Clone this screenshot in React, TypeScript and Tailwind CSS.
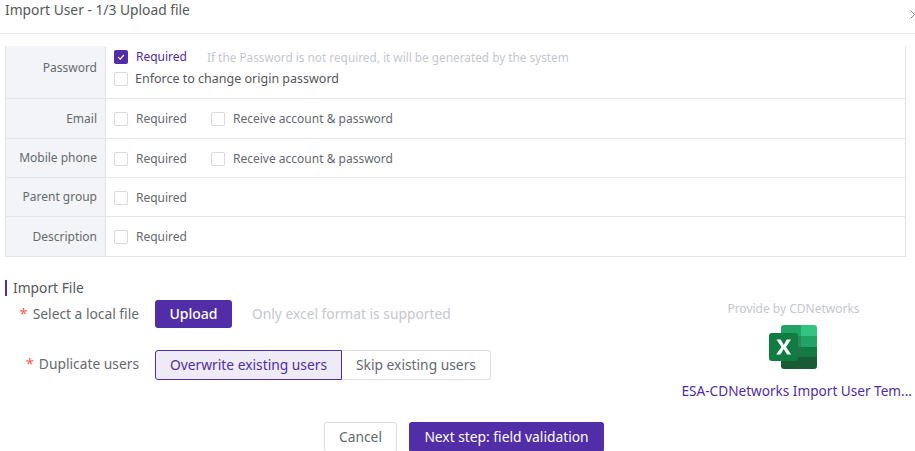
import * as React from "react"

const Box = ({ checked = false }: { checked?: boolean }) => (
    <span
        className={
            checked
                ? "flex h-[14px] w-[14px] shrink-0 items-center justify-center rounded-[2px] bg-[#512da8]"
                : "h-[14px] w-[14px] shrink-0 rounded-[2px] border border-[#d9d9de] bg-white"
        }
    >
        {checked && (
            <svg width="10" height="10" viewBox="0 0 10 10" fill="none">
                <path d="M2.2 5.2 4.2 7.2 7.9 3" stroke="#fff" strokeWidth="1.2" />
            </svg>
        )}
    </span>
)

const Check = ({ label, className = "" }: { label: string; className?: string }) => (
    <span className={`flex items-center ${className}`}>
        <Box />
        <span className="ml-[8px]">{label}</span>
    </span>
)

const Row = ({ label, children, height }: { label: string; children: React.ReactNode; height: string }) => (
    <div className={`flex border-b border-[#e3e5e8] ${height}`}>
        <div className="flex w-[100px] shrink-0 items-center justify-end border-r border-[#e3e5e8] bg-[#f2f4f7] pr-[8px] text-[#666a70]">
            {label}
        </div>
        <div className="flex min-w-0 flex-1 items-center pl-[8px] text-[#666a70]">{children}</div>
    </div>
)

const ExcelIcon = () => (
    <svg className="block" width="48" height="44" viewBox="0 0 48 44">
        <path d="M15 0h20v11H12V3a3 3 0 0 1 3-3z" fill="#21a366" />
        <path d="M32 0h13a3 3 0 0 1 3 3v8H32z" fill="#33c481" />
        <rect x="12" y="11" width="36" height="11" fill="#107c41" opacity="0.9" />
        <rect x="32" y="11" width="16" height="11" fill="#21a366" />
        <rect x="12" y="22" width="36" height="10" fill="#185c37" opacity="0.9" />
        <rect x="32" y="22" width="16" height="10" fill="#107c41" />
        <path d="M12 32h36v9a3 3 0 0 1-3 3H15a3 3 0 0 1-3-3z" fill="#185c37" />
        <rect x="0" y="8" width="29" height="28" rx="3" fill="#107c41" />
        <path d="M7.5 14.5h4.2l3 5.4 3.1-5.4H22L17 22l5.2 7.5H18l-3.3-5.6-3.3 5.6H7.2L12.5 22z" fill="#fff" />
    </svg>
)

export default function App() {
    return (
        <div className="h-[451px] w-[915px] overflow-hidden bg-white text-[12px] leading-[18px] text-[#666a70] [font-family:'Noto_Sans',sans-serif]">
            {/* Header */}
            <div className="flex h-[34px] items-start justify-between border-b border-[#e5e6e8] pl-[5px]">
                <span className="text-[13.8px] leading-[20px] text-[#55585c]">Import User - 1/3 Upload file</span>
                <svg className="mt-[10px] mr-[-4px] shrink-0" width="9" height="9" viewBox="0 0 9 9" fill="none">
                    <path d="M0.5 0.5 8.5 8.5M8.5 0.5 0.5 8.5" stroke="#8a8d91" strokeWidth="1" />
                </svg>
            </div>

            {/* Field rules table, scrolled a little under the header */}
            <div className="mt-[12px] ml-[5px] w-[901px] overflow-hidden border-r border-l border-[#e3e5e8]">
                <div className="mt-[-8px]">
                    <Row label="Password" height="h-[61px]">
                        <div className="flex flex-col gap-[4px]">
                            <div className="flex items-center">
                                <Box checked />
                                <span className="ml-[8px] text-[#512da8]">Required</span>
                                <span className="ml-[20px] text-[11.8px] text-[#c5c8d0]">If the Password is not required, it will be generated by the system</span>
                            </div>
                            <span className="flex items-center">
                                <Box />
                                <span className="ml-[7px] text-[12.5px] text-[#55585c]">Enforce to change origin password</span>
                            </span>
                        </div>
                    </Row>
                    <Row label="Email" height="h-[40px]">
                        <Check label="Required" />
                        <Check label="Receive account & password" className="ml-[24px]" />
                    </Row>
                    <Row label="Mobile phone" height="h-[39px]">
                        <Check label="Required" className="pt-[1px]" />
                        <Check label="Receive account & password" className="ml-[24px] pt-[1px]" />
                    </Row>
                    <Row label="Parent group" height="h-[39px]">
                        <Check label="Required" className="pt-[1px]" />
                    </Row>
                    <Row label="Description" height="h-[40px]">
                        <Check label="Required" />
                    </Row>
                </div>
            </div>

            {/* Import file */}
            <div className="mt-[23px] ml-[5px] border-l-2 border-[#512da8] pl-[6px] text-[13.8px] leading-[16px] text-[#55585c]">Import File</div>
            <div className="flex">
                <div className="w-[662px] shrink-0 text-[13.8px]">
                    <div className="mt-[4px] flex items-center">
                        <div className="w-[139px] text-right">
                            <span className="mr-[1px] text-[15px] leading-none text-[#ff5a4f]">* </span>Select a local file
                        </div>
                        <button className="ml-[16px] h-[28px] w-[77px] rounded-[3px] bg-[#512da8] text-[14px] font-medium text-white">Upload</button>
                        <span className="ml-[20px] text-[#c5c8d0]">Only excel format is supported</span>
                    </div>
                    <div className="mt-[22px] flex items-center">
                        <div className="mt-[-2px] w-[139px] text-right">
                            <span className="mr-[1px] text-[15px] leading-none text-[#ff5a4f]">* </span>Duplicate users
                        </div>
                        <div className="ml-[16px] flex h-[30px]">
                            <span className="flex w-[187px] items-center justify-center rounded-l-[3px] border border-[#512da8] bg-[#eeebf7] text-[#512da8]">Overwrite existing users</span>
                            <span className="flex w-[149px] items-center justify-center rounded-r-[3px] border border-l-0 border-[#dcdee2]">Skip existing users</span>
                        </div>
                    </div>
                </div>
                <div className="mt-[4px] flex min-w-0 flex-1 flex-col items-center pl-[10px]">
                    <span className="text-[12px] text-[#c5c8d0]">Provide by CDNetworks</span>
                    <div className="mt-[7px] ml-[-2px]"><ExcelIcon /></div>
                    <span className="mt-[13px] mr-[3px] self-end text-[13.6px] whitespace-nowrap text-[#512da8]">ESA-CDNetworks Import User Tem...</span>
                </div>
            </div>

            {/* Footer */}
            <div className="mt-[22px] flex justify-center gap-[12px] pl-[13px] text-[13.8px]">
                <button className="h-[30px] w-[73px] rounded-[3px] border border-[#dcdee2] bg-white">Cancel</button>
                <button className="h-[30px] w-[195px] rounded-[3px] bg-[#512da8] text-white">Next step: field validation</button>
            </div>
        </div>
    )
}
